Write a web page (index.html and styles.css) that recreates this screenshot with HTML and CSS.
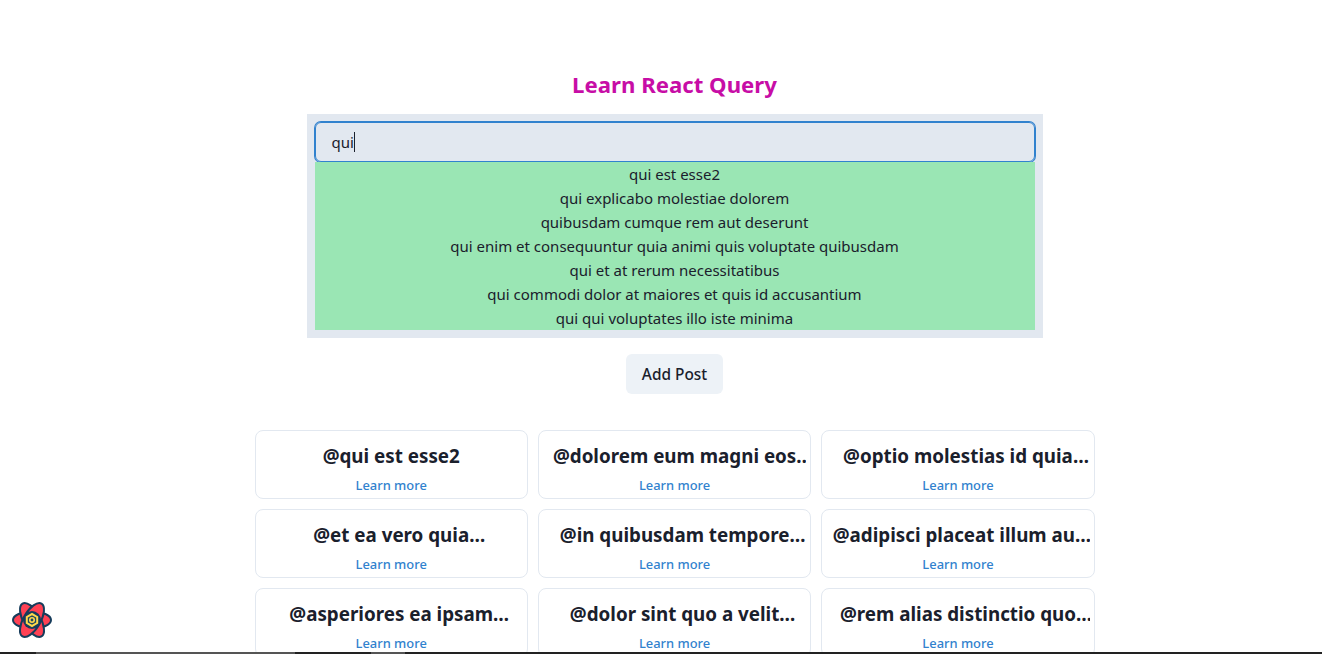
FILE: index.html
```html
<!DOCTYPE html>
<html lang="en">
<head>
<meta charset="utf-8">
<title>Learn React Query</title>
<link rel="stylesheet" href="styles.css">
</head>
<body>
<main class="page">
  <h1 class="title">Learn React Query</h1>
  <section class="search">
    <div class="field"><span class="typed">qui</span><span class="caret"></span></div>
    <ul class="results">
      <li>qui est esse2</li>
      <li>qui explicabo molestiae dolorem</li>
      <li>quibusdam cumque rem aut deserunt</li>
      <li>qui enim et consequuntur quia animi quis voluptate quibusdam</li>
      <li>qui et at rerum necessitatibus</li>
      <li>qui commodi dolor at maiores et quis id accusantium</li>
      <li>qui qui voluptates illo iste minima</li>
    </ul>
  </section>
  <button class="add">Add Post</button>
  <section class="grid">
    <article class="card"><h2>@qui est esse2</h2><a href="#">Learn more</a></article>
    <article class="card"><h2>@dolorem eum magni eos aperiam quia</h2><a href="#">Learn more</a></article>
    <article class="card"><h2>@optio molestias id quia eum</h2><a href="#">Learn more</a></article>
    <article class="card"><h2>@et ea vero quia laudantium autem</h2><a href="#">Learn more</a></article>
    <article class="card"><h2>@in quibusdam tempore odit est dolorem</h2><a href="#">Learn more</a></article>
    <article class="card"><h2>@adipisci placeat illum aut reiciendis qui</h2><a href="#">Learn more</a></article>
    <article class="card"><h2>@asperiores ea ipsam voluptatibus modi minima quia sint</h2><a href="#">Learn more</a></article>
    <article class="card"><h2>@dolor sint quo a velit explicabo quia nam</h2><a href="#">Learn more</a></article>
    <article class="card"><h2>@rem alias distinctio quo quis</h2><a href="#">Learn more</a></article>
  </section>
</main>
<button class="devtools" aria-label="Open React Query Devtools">
  <svg viewBox="0 0 40 40" width="40" height="40">
    <g fill="#ff4154" stroke="#163c5b" stroke-width="2">
      <ellipse cx="20" cy="20" rx="19" ry="8.5"/>
      <ellipse cx="20" cy="20" rx="19" ry="8.5" transform="rotate(60 20 20)"/>
      <ellipse cx="20" cy="20" rx="19" ry="8.5" transform="rotate(120 20 20)"/>
    </g>
    <circle cx="20" cy="20" r="9" fill="#163c5b"/>
    <path d="M20 12.8l6.2 3.6v7.2L20 27.2l-6.2-3.6v-7.2z" fill="#ffd94c"/>
    <path d="M20 15.2l4.2 2.4v4.8L20 24.8l-4.2-2.4v-4.8z" fill="#1f4a5e"/>
    <circle cx="20" cy="20" r="3" fill="#ffd94c"/>
    <circle cx="20" cy="20" r="1.4" fill="#1f4a5e"/>
  </svg>
</button>
<div class="scrollbar"><span class="thumb-a"></span><span class="thumb-b"></span></div>
</body>
</html>
```
FILE: styles.css
```css
* { box-sizing: border-box; }
html, body { margin: 0; height: 654px; overflow: hidden; }
body {
  background: #fff;
  color: #1a202c;
  font-family: "Noto Sans", "Open Sans", sans-serif;
  font-size: 15px;
  line-height: 24px;
  position: relative;
}
.page {
  width: 1349px;
  display: flex;
  flex-direction: column;
  align-items: center;
  padding-top: 70px;
}
.title {
  margin: 0 0 14px;
  font-size: 22.2px;
  line-height: 30px;
  font-weight: 700;
  color: #c70da6;
}
.search {
  width: 736px;
  padding: 8px;
  background: #e2e8f0;
}
.field {
  height: 40px;
  padding-left: 16px;
  padding-bottom: 1px;
  display: flex;
  align-items: center;
  border: 1px solid #3182ce;
  border-radius: 6px;
  box-shadow: 0 0 0 1px #3182ce;
}
.caret { width: 1px; height: 20px; background: #1a202c; }
.results {
  list-style: none;
  margin: 0;
  padding: 0;
  background: #9ae6b4;
  text-align: center;
}
.add {
  margin-top: 16px;
  height: 40px;
  width: 97px;
  padding: 0;
  border: 0;
  border-radius: 6px;
  background: #edf2f7;
  color: #1a202c;
  font: 500 15.4px "Noto Sans", "Open Sans", sans-serif;
}
.grid {
  margin-top: 36px;
  width: 840px;
  display: grid;
  grid-template-columns: repeat(3, 273.4px);
  column-gap: 10px;
  row-gap: 10px;
}
.card {
  height: 69px;
  padding: 10px 4px 0;
  border: 1px solid #e2e8f0;
  border-radius: 8px;
  text-align: center;
  overflow: hidden;
}
.card h2 {
  margin: 0;
  font-size: 18.8px;
  line-height: 30px;
  font-weight: 700;
  display: -webkit-box;
  -webkit-box-orient: vertical;
  -webkit-line-clamp: 1;
  overflow: hidden;
}
.card a {
  display: block;
  margin-top: 4px;
  font-size: 12.9px;
  line-height: 20px;
  font-weight: 500;
  color: #3182ce;
  text-decoration: none;
}
.devtools {
  position: absolute;
  left: 12px;
  bottom: 14px;
  width: 40px;
  height: 40px;
  padding: 0;
  border: 0;
  background: none;
}
.scrollbar {
  position: absolute;
  left: 0;
  right: 0;
  bottom: 0;
  height: 2px;
  background: #222;
  display: flex;
}
.thumb-a { margin-left: 36px; width: 259px; background: #555; }
.thumb-b { margin-left: 76px; width: 34px; background: #555; }
```
